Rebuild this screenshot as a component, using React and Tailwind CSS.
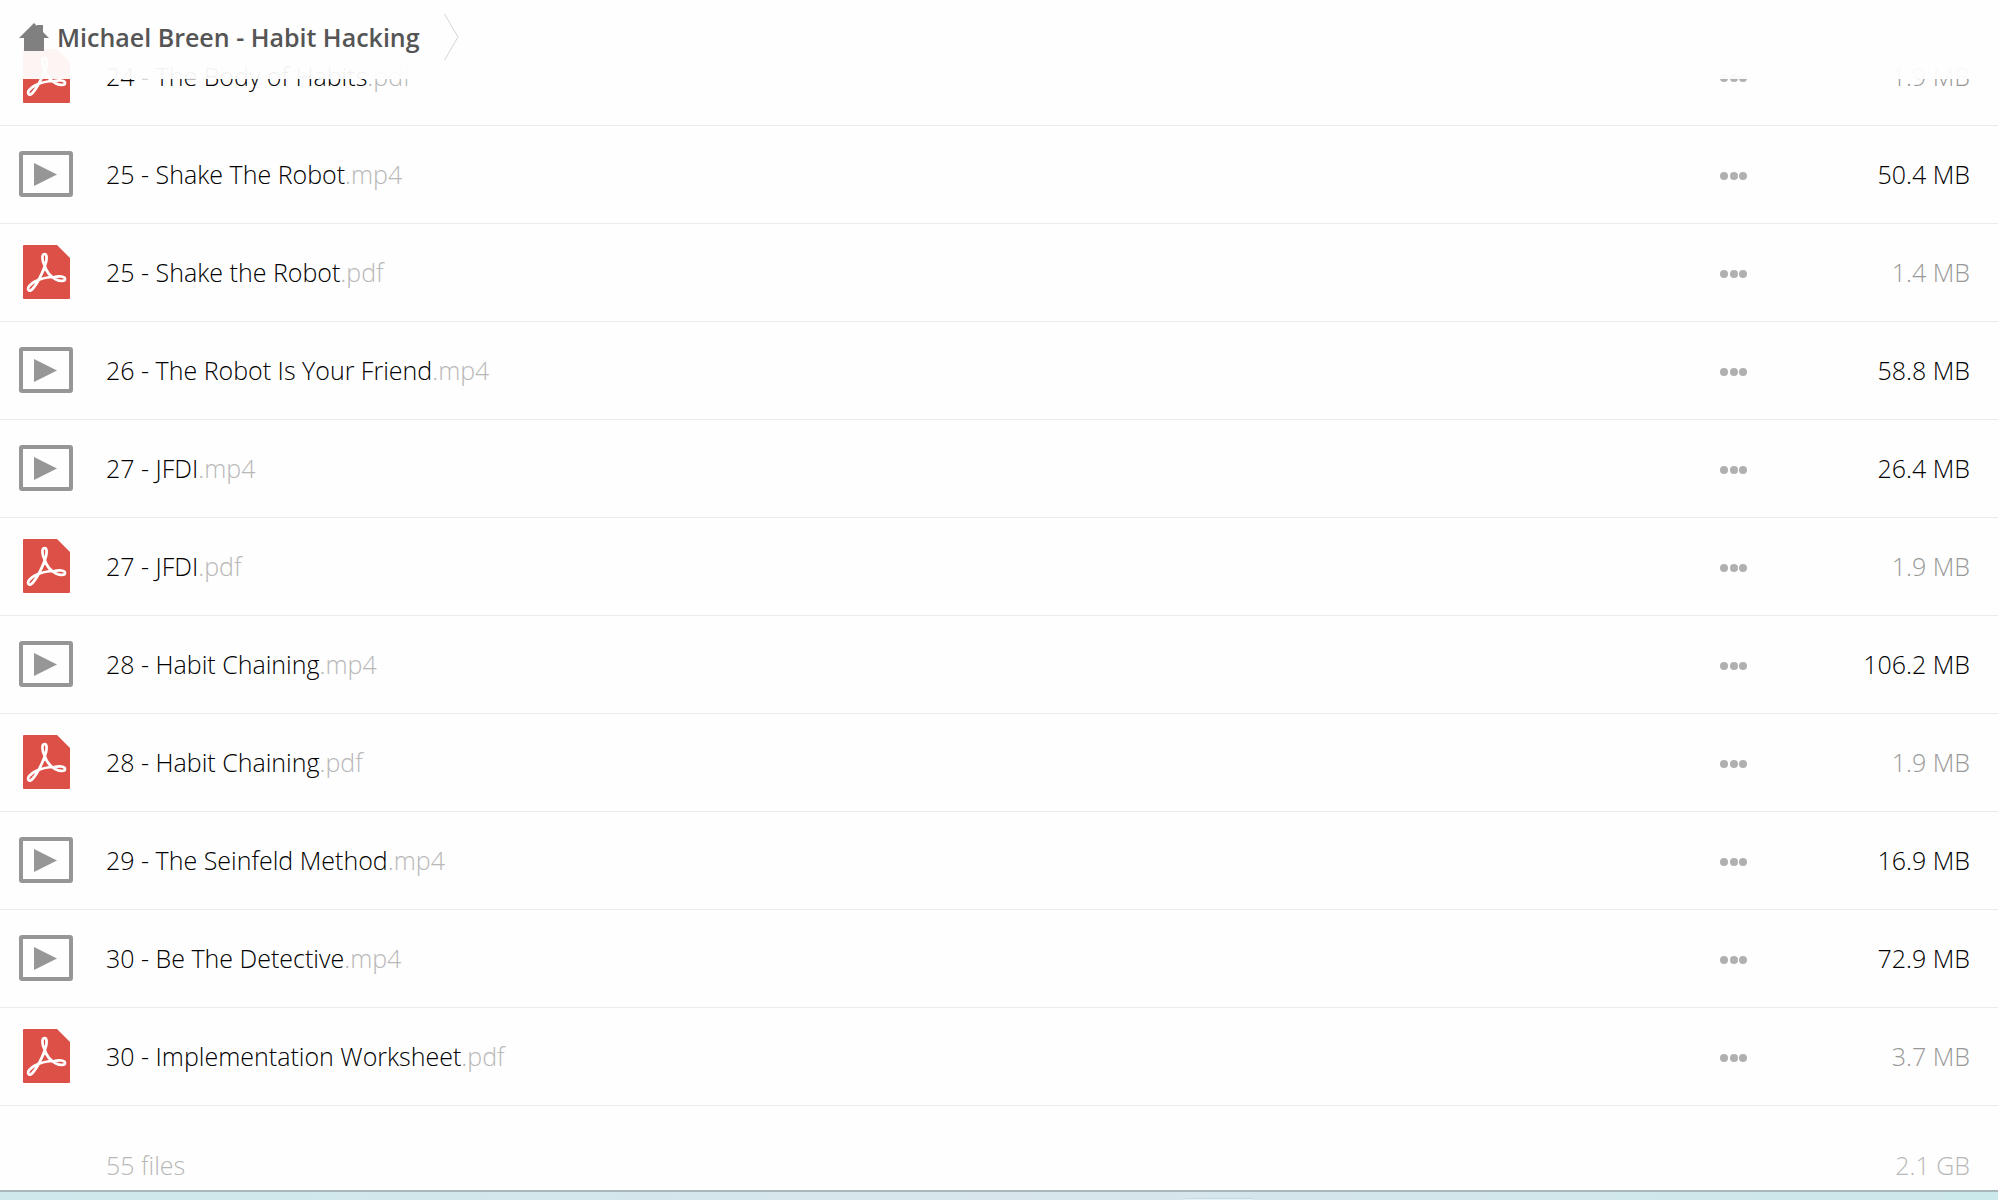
import React from 'react';

const files = [
    { name: '24 - The Body of Habits', ext: 'pdf', size: '1.9 MB' },
    { name: '25 - Shake The Robot', ext: 'mp4', size: '50.4 MB' },
    { name: '25 - Shake the Robot', ext: 'pdf', size: '1.4 MB' },
    { name: '26 - The Robot Is Your Friend', ext: 'mp4', size: '58.8 MB' },
    { name: '27 - JFDI', ext: 'mp4', size: '26.4 MB' },
    { name: '27 - JFDI', ext: 'pdf', size: '1.9 MB' },
    { name: '28 - Habit Chaining', ext: 'mp4', size: '106.2 MB' },
    { name: '28 - Habit Chaining', ext: 'pdf', size: '1.9 MB' },
    { name: '29 - The Seinfeld Method', ext: 'mp4', size: '16.9 MB' },
    { name: '30 - Be The Detective', ext: 'mp4', size: '72.9 MB' },
    { name: '30 - Implementation Worksheet', ext: 'pdf', size: '3.7 MB' },
];

const HomeIcon = () => (
    <svg width="30" height="28" viewBox="0 0 30 28" fill="#808080" aria-hidden="true">
        <path d="M15 0L18 3V2H24V9L30 15H25V28H5V15H0Z" />
    </svg>
);

const VideoIcon = () => (
    <svg width="54" height="46" viewBox="0 0 54 46" aria-hidden="true">
        <rect x="2" y="2" width="50" height="42" rx="1" fill="none" stroke="#969696" strokeWidth="4" />
        <path d="M15 12L38 23.5L15 35Z" fill="#969696" />
    </svg>
);

const PdfIcon = () => (
    <svg width="47" height="54" viewBox="0 0 47 54" aria-hidden="true">
        <path d="M1 0H34L47 13V53Q47 54 46 54H1Q0 54 0 53V1Q0 0 1 0Z" fill="#dd5047" />
        <path
            d="M21.5 9C18.5 9 19 16 21.5 20.5C23.5 27 28 32 33 34.5C37 36.500 42 36.500 42 34C42 31 36 31 31 32C25 32 17 34 12 36.500C7 39 4 43 5.500 45C8 47.500 12 41 14.500 37C17 32.500 20 27 22 20.500C24 16 24.500 9 21.500 9Z"
            fill="none"
            stroke="#fff"
            strokeWidth="2.7"
            strokeLinejoin="round"
        />
    </svg>
);

const DotsIcon = () => (
    <svg width="28" height="8" viewBox="0 0 28 8" fill="#b0b0b0" aria-hidden="true">
        <circle cx="4" cy="4" r="4" />
        <circle cx="14" cy="4" r="4" />
        <circle cx="23" cy="4" r="4" />
    </svg>
);

const FileRow = ({ file }) => {
    const isVideo = file.ext === 'mp4';

    return (
        <tr className="h-[98px] border-b border-[#ebebeb]">
            <td className="w-[106px] pl-[19px]">
                <div className="flex w-[54px] justify-center">
                    {isVideo ? <VideoIcon /> : <PdfIcon />}
                </div>
            </td>
            <td>
                <a href="#" className="text-black">
                    {file.name}
                    <span className="text-[#b8b8b8]">.{file.ext}</span>
                </a>
            </td>
            <td className="w-20 pt-1">
                <button type="button" aria-label="File actions" className="flex py-2">
                    <DotsIcon />
                </button>
            </td>
            <td className={`w-[198px] pr-7 text-right ${isVideo ? 'text-black' : 'text-[#999]'}`}>
                {file.size}
            </td>
        </tr>
    );
};

const App = () => {
    return (
        <div className="flex h-screen flex-col overflow-hidden bg-[#cfe8ec] font-['Open_Sans',sans-serif] text-[25px] leading-8 font-light">
            <div className="min-h-0 flex-1 overflow-hidden border-b-2 border-[#a9b8ba] bg-[#fefefe]">
                <header className="sticky top-0 z-10 flex h-[79px] items-start bg-[#fefefe]/95">
                    <a href="#" className="flex h-[74px] items-center gap-2 pl-[19px] font-semibold text-[#555]">
                        <HomeIcon />
                        Michael Breen - Habit Hacking
                    </a>
                    <svg className="mt-3.5 ml-6" width="15" height="46" viewBox="0 0 15 46" aria-hidden="true">
                        <path d="M0.500 0L14 23L0.500 46" fill="none" stroke="#d4d4d4" strokeWidth="1" />
                    </svg>
                </header>

                <table className="-mt-[52px] w-full border-collapse">
                    <tbody>
                        {files.map((file) => (
                            <FileRow key={file.name + file.ext} file={file} />
                        ))}
                    </tbody>
                </table>

                <footer className="flex justify-between pt-[43px] pr-7 pl-[106px] text-[#b8b8b8]">
                    <span>55 files</span>
                    <span>2.1 GB</span>
                </footer>
            </div>

            {/* strip of desktop below the window */}
            <div className="flex h-2 justify-center bg-linear-to-r from-[#cde9ec] via-[#d8e5ec] to-[#cbe8ea]">
                <div className="mt-1.5 ml-[440px] h-0.5 w-[70px] rounded-t border-t border-[#c5dbe2] bg-[#e6f1f5]" />
            </div>
        </div>
    );
};

export default App;
